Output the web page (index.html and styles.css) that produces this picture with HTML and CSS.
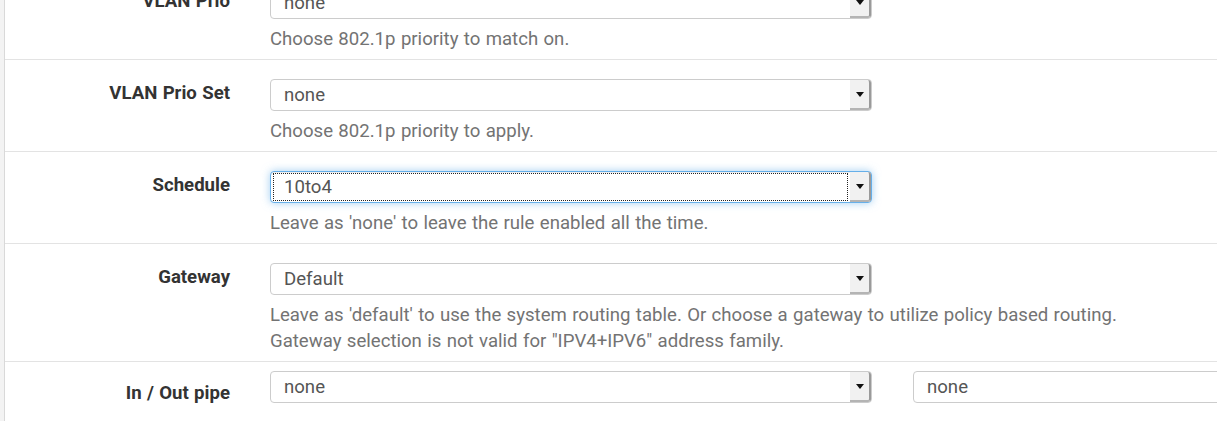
FILE: index.html
```html
<!DOCTYPE html>
<html lang="en">
<head>
<meta charset="utf-8">
<title>Firewall rule – advanced options</title>
<link rel="stylesheet" href="styles.css">
</head>
<body>
<div class="panel">
  <div class="row">
    <div class="label">VLAN Prio</div>
    <div class="control">
      <div class="select"><span class="value">none</span><span class="btn"><i class="caret"></i></span></div>
      <div class="help">Choose 802.1p priority to match on.</div>
    </div>
  </div>
  <div class="row">
    <div class="label">VLAN Prio Set</div>
    <div class="control">
      <div class="select"><span class="value">none</span><span class="btn"><i class="caret"></i></span></div>
      <div class="help">Choose 802.1p priority to apply.</div>
    </div>
  </div>
  <div class="row">
    <div class="label">Schedule</div>
    <div class="control">
      <div class="select focused"><span class="value">10to4</span><span class="btn"><i class="caret"></i></span></div>
      <div class="help">Leave as 'none' to leave the rule enabled all the time.</div>
    </div>
  </div>
  <div class="row">
    <div class="label">Gateway</div>
    <div class="control">
      <div class="select"><span class="value">Default</span><span class="btn"><i class="caret"></i></span></div>
      <div class="help">Leave as 'default' to use the system routing table. Or choose a gateway to utilize policy based routing.<br>Gateway selection is not valid for "IPV4+IPV6" address family.</div>
    </div>
  </div>
  <div class="row row-compact">
    <div class="label label-low">In / Out pipe</div>
    <div class="control">
      <div class="select"><span class="value">none</span><span class="btn"><i class="caret"></i></span></div>
    </div>
    <div class="control extra">
      <div class="select"><span class="value">none</span><span class="btn"><i class="caret"></i></span></div>
    </div>
  </div>
</div>
</body>
</html>
```
FILE: styles.css
```css
html, body {
  margin: 0;
  padding: 0;
  overflow: hidden;
}
body {
  width: 1217px;
  height: 421px;
  background: #f3f3f3;
  font-family: Roboto, "Liberation Sans", sans-serif;
  font-size: 18.6px;
  line-height: 26px;
  word-spacing: 0.75px;
  color: #333;
}
.panel {
  margin-left: 4px;
  margin-top: -32px;
  border-left: 1px solid #d9d9d9;
  background: #fff;
  height: 460px;
}
.row {
  display: grid;
  grid-template-columns: 265px 602px 1fr;
  align-items: start;
  padding: 19px 0 7px;
}
.row + .row {
  border-top: 1px solid #e3e3e3;
}
.row-compact {
  padding-top: 9px;
}
.label {
  padding: 1px 40px 0 0;
  text-align: right;
  font-weight: 700;
  color: #333;
  white-space: nowrap;
}
.label-low {
  padding-top: 9px;
}
.control {
  min-width: 0;
}
.extra {
  padding-left: 41px;
}
.extra .select {
  width: 602px;
}
.select {
  box-sizing: border-box;
  height: 32px;
  display: flex;
  align-items: stretch;
  border: 1px solid #cccccc;
  border-radius: 4px;
  background: #fff;
  color: #555;
  white-space: nowrap;
}
.value {
  flex: 1;
  display: flex;
  align-items: center;
  padding-left: 13px;
  margin: 0;
}
.focused {
  border-color: #66afe9;
  box-shadow: inset 0 1px 1px rgba(0,0,0,.075), 0 0 8px rgba(102,175,233,.6);
}
.focused .value {
  margin: 1px 2px 1px 2px;
  border: 1px dotted #222;
  padding-left: 10px;
}
.btn {
  width: 19px;
  display: flex;
  align-items: center;
  justify-content: center;
  background: #f1f1f1;
  border-right: 2px solid #9a9a9a;
  border-bottom: 2px solid #b4b4b4;
  border-radius: 0 3px 3px 0;
}
.caret {
  display: block;
  width: 0;
  height: 0;
  border-left: 4px solid transparent;
  border-right: 4px solid transparent;
  border-top: 5px solid #111;
  margin-top: 1px;
}
.help {
  margin-top: 7px;
  color: #737373;
  white-space: nowrap;
}
```
